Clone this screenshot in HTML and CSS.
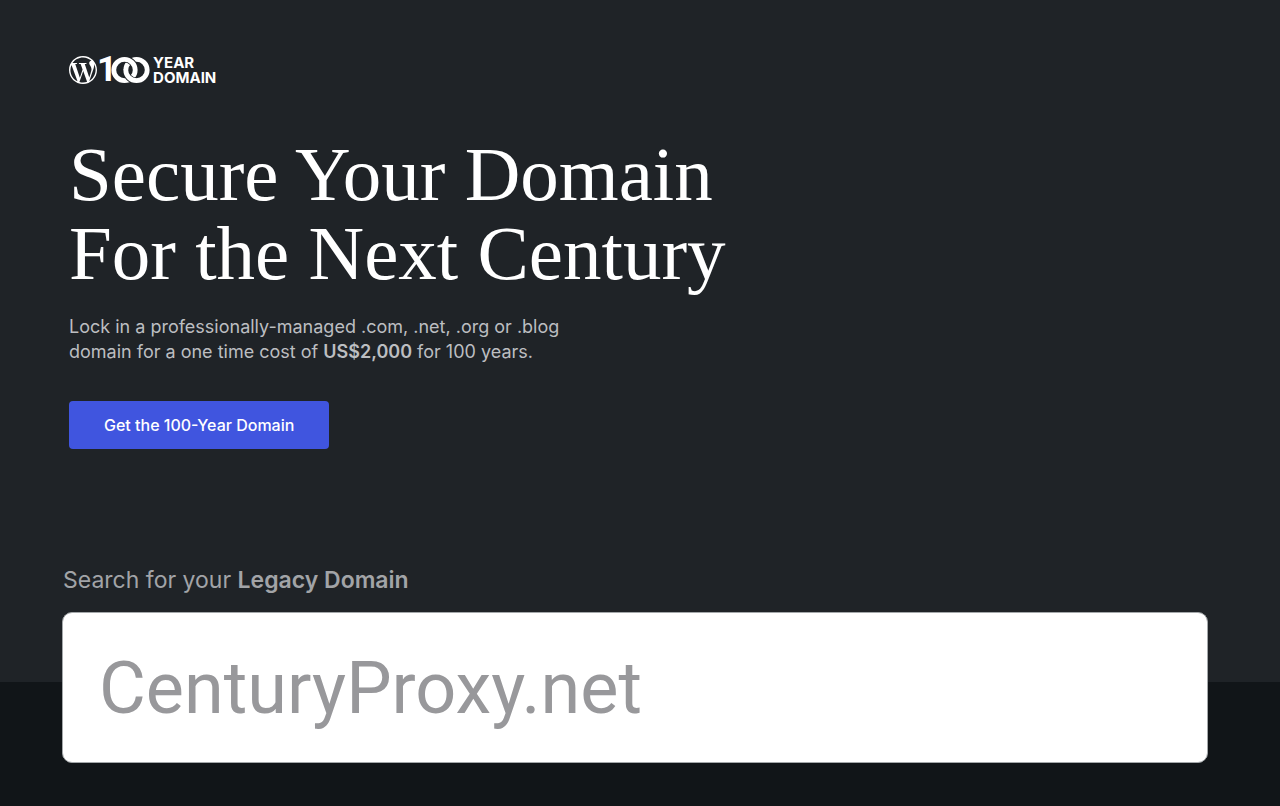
FILE: index.html
```html
<!DOCTYPE html>
<html lang="en">
<head>
<meta charset="utf-8">
<meta name="viewport" content="width=device-width, initial-scale=1">
<title>100-Year Domain</title>
<link rel="stylesheet" href="styles.css">
</head>
<body>
<main class="hero">
  <section class="intro">
    <div class="logo">
      <svg class="logo-mark" viewBox="0 0 24 24" aria-hidden="true"><path fill="currentColor" d="M21.469 6.825c.84 1.537 1.318 3.3 1.318 5.175 0 3.979-2.156 7.456-5.363 9.325l3.295-9.527c.615-1.54.82-2.771.82-3.864 0-.405-.026-.78-.07-1.11m-7.981.105c.647-.03 1.232-.105 1.232-.105.582-.075.514-.93-.067-.899 0 0-1.755.135-2.88.135-1.064 0-2.85-.15-2.85-.15-.585-.03-.661.855-.075.885 0 0 .54.061 1.125.09l1.68 4.605-2.37 7.08L5.354 6.9c.649-.03 1.234-.1 1.234-.1.585-.075.516-.93-.065-.896 0 0-1.746.138-2.874.138-.2 0-.438-.008-.69-.015C4.911 3.15 8.235 1.215 12 1.215c2.809 0 5.365 1.072 7.286 2.833-.046-.003-.091-.009-.141-.009-1.06 0-1.812.923-1.812 1.914 0 .89.513 1.643 1.06 2.531.411.72.89 1.643.89 2.977 0 .915-.354 1.994-.821 3.479l-1.075 3.585-3.9-11.61.001.014zM12 22.784c-1.059 0-2.081-.153-3.048-.437l3.237-9.406 3.315 9.087c.024.053.05.101.078.149-1.12.393-2.325.609-3.582.609M1.211 12c0-1.564.336-3.05.935-4.39L7.29 21.709C3.694 19.96 1.212 16.271 1.211 12M12 0C5.385 0 0 5.385 0 12s5.385 12 12 12 12-5.385 12-12S18.615 0 12 0"/></svg>
      <span class="logo-one">1</span>
      <svg class="logo-rings" viewBox="0 0 39 28" aria-hidden="true" fill="none">
        <circle cx="25.500" cy="14" r="10.700" stroke="#fff" stroke-width="4.800"/>
        <path d="M13.500 3.300A10.700 10.700 0 0 1 24.200 14" stroke="#1f2327" stroke-width="6.600"/>
        <circle cx="13.500" cy="14" r="10.700" stroke="#fff" stroke-width="4.800"/>
        <path d="M14.800 14A10.700 10.700 0 0 0 25.500 24.700" stroke="#1f2327" stroke-width="6.600"/>
        <path d="M14.800 13.500V14A10.700 10.700 0 0 0 25.500 24.700H26" stroke="#fff" stroke-width="4.800"/>
      </svg>
      <span class="logo-words">YEAR<br>DOMAIN</span>
    </div>
    <h1 class="title">Secure Your Domain<br>For the Next Century</h1>
    <p class="lead">Lock in a professionally-managed .com, .net, .org or .blog domain for a one time cost of <strong>US$2,000</strong> for 100 years.</p>
    <button class="cta" type="button">Get the 100-Year Domain</button>
  </section>
  <form class="search">
    <label class="search-label" for="domain">Search for your <strong>Legacy Domain</strong></label>
    <input class="search-input" id="domain" type="text" placeholder="CenturyProxy.net">
  </form>
</main>
</body>
</html>
```
FILE: styles.css
```css
* {
  box-sizing: border-box;
}

body {
  margin: 0;
  background: #111518;
  color: #fff;
  font-family: Inter, "Liberation Sans", sans-serif;
}

.hero {
  display: flow-root;
  margin-bottom: 124px;
  padding: 55px 72px 0 62px;
  background: #1f2327;
}

.intro {
  padding-left: 7px;
}

.logo {
  display: flex;
  align-items: center;
  height: 29px;
}

.logo-mark {
  width: 28px;
  height: 28px;
}

.logo-one {
  font-family: Roboto, sans-serif;
  font-size: 35px;
  line-height: 29px;
  font-weight: 700;
}

.logo-rings {
  width: 39px;
  height: 28px;
  margin-left: -6px;
}

.logo-words {
  margin-left: 3px;
  font-size: 15px;
  line-height: 15px;
  font-weight: 700;
}

.title {
  margin: 51px 0 0;
  font-family: "Liberation Serif", serif;
  font-size: 77px;
  line-height: 79px;
  font-weight: 400;
}

.lead {
  max-width: 500px;
  margin: 21px 0 0;
  color: #bcbec1;
  font-size: 18px;
  line-height: 25px;
}

.lead strong,
.search-label strong {
  font-weight: 600;
}

.cta {
  display: block;
  margin-top: 37px;
  padding: 12px 35px;
  border: 0;
  border-radius: 4px;
  background: #4055df;
  color: #fff;
  font: 500 16px/24px Inter, "Liberation Sans", sans-serif;
}

.search {
  margin: 116px 0 -81px;
}

.search-label {
  display: block;
  padding-left: 1px;
  color: #a2a4a7;
  font-size: 23px;
  line-height: 30px;
}

.search-input {
  display: block;
  width: 100%;
  height: 151px;
  margin-top: 17px;
  padding: 2px 36px 0;
  border: 1px solid #a4a8aa;
  border-radius: 10px;
  background: #fff;
  color: #1f2327;
  font: 400 72px/90px Roboto, "Liberation Sans", sans-serif;
}

.search-input::placeholder {
  color: #98989b;
  opacity: 1;
}
```
